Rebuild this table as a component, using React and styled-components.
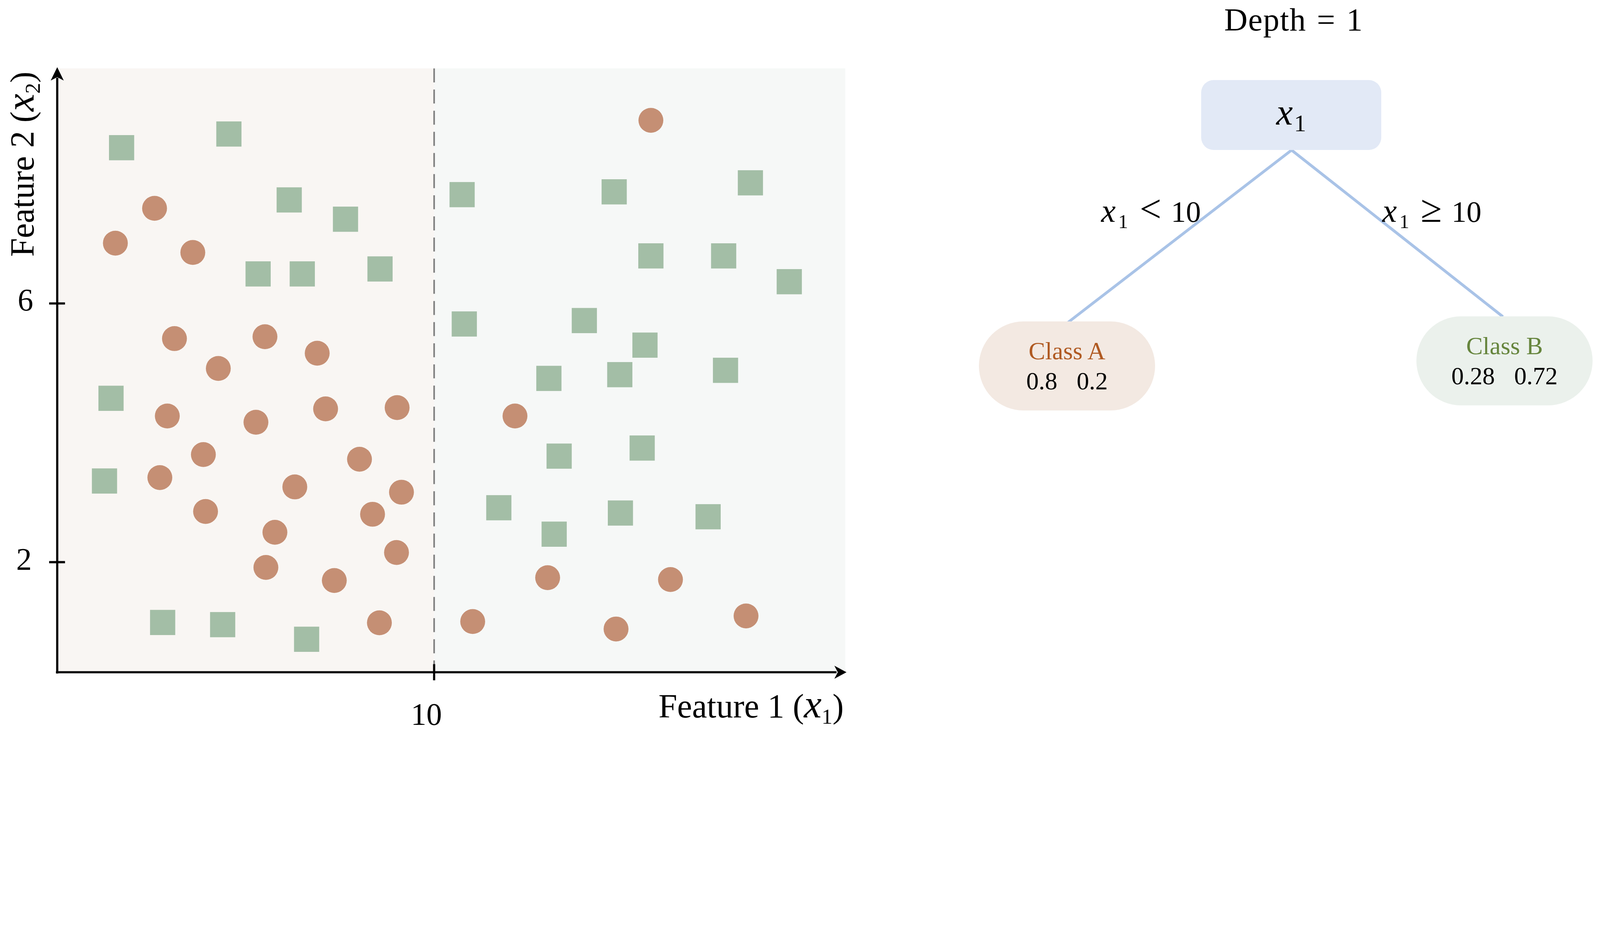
import React from 'react';
import styled, { createGlobalStyle } from 'styled-components';

// Measurements are taken in reference pixels (5145 across) and
// turned into viewport-width units, so the page fills the frame.
const REF_WIDTH = 5145;
const px = (n) => `${((n * 100) / REF_WIDTH).toFixed(4)}vw`;

const GlobalStyle = createGlobalStyle`
  html, body {
    margin: 0;
    padding: 0;
    background: #ffffff;
    overflow: hidden;
  }
  body {
    font-family: "Liberation Serif", "DejaVu Serif", serif;
    color: #000000;
  }
`;

const Page = styled.main`
  display: flex;
  align-items: flex-start;
  width: ${px(5145)};
  height: ${px(2371)};
  overflow: hidden;
  background: #ffffff;
`;

const ChartSvg = styled.svg`
  flex: none;
  display: block;
  width: ${px(2740)};
  height: ${px(2371)};
  font-family: "Liberation Serif", "DejaVu Serif", serif;
`;

const TreePanel = styled.section`
  flex: none;
  width: ${px(1973)};
  margin-left: ${px(408)};
  display: flex;
  flex-direction: column;
  align-items: center;
`;

const Title = styled.h2`
  margin: ${px(11)} 0 0 ${px(51)};
  font-size: ${px(104)};
  line-height: ${px(104)};
  font-weight: 400;
  letter-spacing: ${px(2)};
  word-spacing: ${px(6)};
  white-space: nowrap;
`;

const Diagram = styled.div`
  position: relative;
  width: 100%;
  display: flex;
  flex-direction: column;
  align-items: center;
`;

const Edges = styled.svg`
  position: absolute;
  left: 0;
  top: 0;
  width: ${px(1973)};
  height: ${px(1205)};
  pointer-events: none;
`;

const RootNode = styled.div`
  position: relative;
  z-index: 1;
  box-sizing: border-box;
  width: ${px(578)};
  height: ${px(225)};
  margin: ${px(142)} 0 0 ${px(35)};
  padding-top: ${px(45)};
  display: flex;
  justify-content: center;
  align-items: flex-start;
  background: #e2e9f6;
  border-radius: ${px(40)};
`;

const RootLabel = styled.span`
  font-size: ${px(120)};
  line-height: ${px(120)};
  white-space: nowrap;
`;

const Var = styled.i`
  font-style: italic;
  font-size: ${(p) => (p.$size ? px(p.$size) : 'inherit')};
  line-height: 1;
`;

const Sub = styled.span`
  position: relative;
  top: ${(p) => px(p.$shift)};
  margin-left: ${(p) => px(p.$gap)};
  font-size: ${(p) => px(p.$size)};
  line-height: 1;
`;

const EdgeLabel = styled.div`
  position: absolute;
  z-index: 1;
  left: ${(p) => px(p.$left)};
  top: ${(p) => px(p.$top)};
  display: flex;
  align-items: baseline;
  font-size: ${px(96)};
  line-height: 1;
  white-space: nowrap;
`;

const Op = styled.span`
  font-size: ${px(124)};
  line-height: 1;
  margin-left: ${px(37)};
`;

const Num = styled.span`
  margin-left: ${px(31)};
`;

const LeafRow = styled.div`
  position: relative;
  z-index: 1;
  width: 100%;
  margin-top: ${px(536)};
  display: flex;
  justify-content: space-between;
  align-items: flex-start;
`;

const Leaf = styled.div`
  box-sizing: border-box;
  width: ${px(566)};
  height: ${px(286)};
  margin-top: ${(p) => px(p.$offset)};
  border-radius: ${px(143)};
  background: ${(p) => p.$fill};
  display: flex;
  flex-direction: column;
  align-items: center;
  justify-content: center;
  font-size: ${px(80)};
  line-height: ${px(97)};
`;

const ClassName = styled.div`
  color: ${(p) => p.$color};
  white-space: nowrap;
`;

const Probs = styled.div`
  display: flex;
  gap: ${px(62)};
  color: #000000;
`;

const circles = [
  [2093, 387], [497, 670], [371, 782], [620, 812], [561, 1089], [852, 1083],
  [1020, 1136], [702, 1185], [538, 1338], [823, 1358], [1047, 1315], [1277, 1311],
  [1656, 1338], [654, 1462], [1156, 1477], [514, 1536], [948, 1566], [1291, 1583],
  [661, 1645], [1198, 1654], [884, 1712], [1275, 1777], [855, 1825], [1075, 1867],
  [1761, 1858], [2156, 1864], [1220, 2003], [1520, 1999], [1981, 2023], [2399, 1981],
];

const squares = [
  [391, 475], [736, 431], [930, 643], [1111, 705], [830, 881], [972, 881],
  [1222, 865], [357, 1281], [336, 1547], [523, 2002], [716, 2009], [986, 2056],
  [1486, 626], [1975, 617], [2413, 588], [2093, 823], [2327, 823], [2538, 906],
  [1493, 1042], [1879, 1031], [2074, 1110], [1765, 1217], [1993, 1205], [2333, 1191],
  [1798, 1467], [2065, 1441], [1604, 1633], [1995, 1650], [2277, 1662], [1782, 1718],
];

const SPLIT = 1396;
const AXIS_X = 184;
const AXIS_Y = 2162;
const TOP = 220;
const RIGHT = 2718;

const ScatterChart = () => (
  <ChartSvg viewBox="0 0 2740 2371">
    <rect x={AXIS_X} y={TOP} width={SPLIT - AXIS_X} height={AXIS_Y - TOP} fill="#f9f6f3" />
    <rect x={SPLIT} y={TOP} width={RIGHT - SPLIT} height={AXIS_Y - TOP} fill="#f6f8f7" />

    {squares.map(([cx, cy], i) => (
      <rect key={`s${i}`} x={cx - 40.5} y={cy - 40.5} width="81" height="81" fill="#a3bea6" />
    ))}
    {circles.map(([cx, cy], i) => (
      <circle key={`c${i}`} cx={cx} cy={cy} r="40" fill="#c58f74" />
    ))}

    <line x1={SPLIT} y1={TOP} x2={SPLIT} y2={AXIS_Y} stroke="#7d7d7d" strokeWidth="5" strokeDasharray="45 23" />

    {/* axes */}
    <line x1={AXIS_X} y1={AXIS_Y + 4} x2={AXIS_X} y2="250" stroke="#000" strokeWidth="7" />
    <polygon points="184,216 205,259 184,248 163,259" fill="#000" />
    <line x1={AXIS_X - 4} y1={AXIS_Y} x2="2690" y2={AXIS_Y} stroke="#000" strokeWidth="7" />
    <polygon points="2722,2162 2683,2141 2694,2162 2683,2183" fill="#000" />

    {/* ticks */}
    <line x1="158" y1="976" x2="209" y2="976" stroke="#000" strokeWidth="7" />
    <line x1="158" y1="1808" x2="209" y2="1808" stroke="#000" strokeWidth="7" />
    <line x1={SPLIT} y1="2136" x2={SPLIT} y2="2188" stroke="#000" strokeWidth="7" />

    <text x="107" y="998" fontSize="100" textAnchor="end">6</text>
    <text x="102" y="1833" fontSize="100" textAnchor="end">2</text>
    <text x="1371" y="2331" fontSize="100" textAnchor="middle">10</text>

    {/* axis titles */}
    <text x="2713" y="2308" fontSize="108" textAnchor="end">
      Feature 1 (
      <tspan fontStyle="italic" fontSize="128">x</tspan>
      <tspan fontSize="70" dy="20">1</tspan>
      <tspan dy="-20">)</tspan>
    </text>
    <text transform="translate(108 826) rotate(-90)" fontSize="108">
      Feature 2 (
      <tspan fontStyle="italic" fontSize="128">x</tspan>
      <tspan fontSize="70" dy="20">2</tspan>
      <tspan dy="-20">)</tspan>
    </text>
  </ChartSvg>
);

const SplitLabel = ({ left, op }) => (
  <EdgeLabel $left={left} $top={496}>
    <Var $size={105}>x</Var>
    <Sub $size={64} $shift={19} $gap={8}>1</Sub>
    <Op>{op}</Op>
    <Num>10</Num>
  </EdgeLabel>
);

const DecisionTree = () => (
  <TreePanel>
    <Title>Depth = 1</Title>
    <Diagram>
      <Edges viewBox="0 0 1973 1205">
        <line x1="1016" y1="359" x2="287" y2="921" stroke="#a9c3e7" strokeWidth="9" />
        <line x1="995" y1="359" x2="1685" y2="903" stroke="#a9c3e7" strokeWidth="9" />
      </Edges>

      <RootNode>
        <RootLabel>
          <Var>x</Var>
          <Sub $size={78} $shift={21} $gap={4}>1</Sub>
        </RootLabel>
      </RootNode>

      <SplitLabel left={393} op="<" />
      <SplitLabel left={1297} op="≥" />

      <LeafRow>
        <Leaf $fill="#f3e9e2" $offset={16}>
          <ClassName $color="#b05a22">Class A</ClassName>
          <Probs>
            <span>0.8</span>
            <span>0.2</span>
          </Probs>
        </Leaf>
        <Leaf $fill="#ebf1ec" $offset={0}>
          <ClassName $color="#66853d">Class B</ClassName>
          <Probs>
            <span>0.28</span>
            <span>0.72</span>
          </Probs>
        </Leaf>
      </LeafRow>
    </Diagram>
  </TreePanel>
);

const App = () => (
  <>
    <GlobalStyle />
    <Page>
      <ScatterChart />
      <DecisionTree />
    </Page>
  </>
);

export default App;
